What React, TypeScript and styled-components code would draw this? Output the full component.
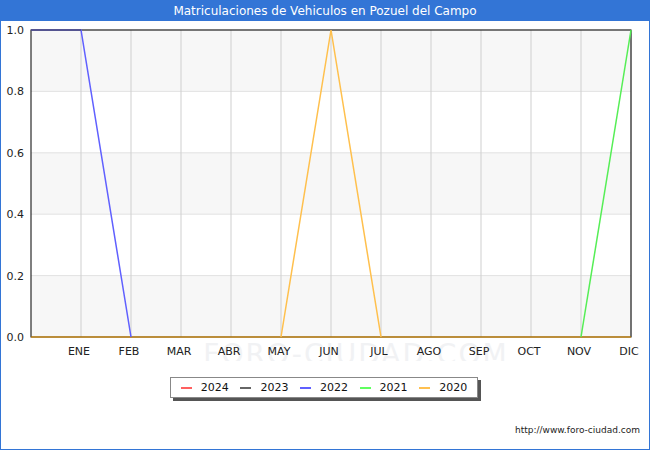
import React from 'react';
import styled, { createGlobalStyle } from 'styled-components';

const Global = createGlobalStyle`
  html, body { margin: 0; padding: 0; background: #fff; }
  body { font-family: "DejaVu Sans", sans-serif; }
`;

const Frame = styled.div`
  width: 650px;
  height: 450px;
  box-sizing: border-box;
  border: 1px solid #3375d6;
  border-top: none;
  display: flex;
  flex-direction: column;
  overflow: hidden;
`;

const Title = styled.div`
  height: 21px;
  background: #3375d6;
  color: #fff;
  font-size: 12px;
  display: flex;
  align-items: center;
  justify-content: center;
`;

const Legend = styled.div`
  align-self: flex-start;
  margin: 16px 0 0 169px;
  width: 308px;
  height: 21px;
  box-sizing: border-box;
  border: 1px solid #888;
  box-shadow: 3px 3px 0 #555;
  display: flex;
  align-items: center;
  justify-content: space-around;
  padding: 0 4px;
  font-size: 11px;
  color: #111;
`;

const Item = styled.div`
  display: flex;
  align-items: center;
  gap: 9px;
`;

const Swatch = styled.span<{ $c: string }>`
  width: 11px;
  height: 2px;
  background: ${p => p.$c};
`;

const Footer = styled.div`
  align-self: flex-end;
  margin: 27px 9px 0 0;
  font-size: 9px;
  color: #222;
`;

const months = ['ENE','FEB','MAR','ABR','MAY','JUN','JUL','AGO','SEP','OCT','NOV','DIC'];
const X = (i: number) => 30 + i * 50;
const Y = (v: number) => 337 - v * 307;

function Chart() {
  const yt = [0, 0.2, 0.4, 0.6, 0.8, 1.0];
  return (
    <svg width={648} height={340} style={{ display: 'block' }} viewBox="0 21 648 340">
      {[0, 2, 4].map(k => (
        <rect key={k} x={30} y={Y(yt[k] + 0.2)} width={600} height={61.4} fill="#f7f7f7" />
      ))}
      <text x={355} y={364} fontSize={28} textAnchor="middle" fill="#f1f2f4" letterSpacing={2}>FORO-CIUDAD.COM</text>
      {yt.map(v => (
        <g key={v}>
          <line x1={30} x2={630} y1={Y(v)} y2={Y(v)} stroke="#e2e2e2" />
          <text x={23} y={Y(v) + 4} fontSize={11} textAnchor="end" fill="#222">{v.toFixed(1)}</text>
        </g>
      ))}
      {months.map((m, i) => (
        <g key={m}>
          <line x1={X(i + 1)} x2={X(i + 1)} y1={30} y2={337} stroke="#cfcfcf" />
          <text x={X(i + 1) - 2} y={355} fontSize={11} textAnchor="middle" fill="#222">{m}</text>
        </g>
      ))}
      <rect x={30} y={30} width={600} height={307} fill="none" stroke="#000" />
      <polyline points={`${X(0)},${Y(0)} ${X(12)},${Y(0)}`} stroke="#ffa500" fill="none" />
      <polyline points={`${X(5)},${Y(0)} ${X(6)},${Y(1)} ${X(7)},${Y(0)}`} stroke="#ffc04d" strokeWidth={1.5} fill="none" />
      <polyline points={`${X(11)},${Y(0)} ${X(12)},${Y(1)}`} stroke="#55ee55" strokeWidth={1.5} fill="none" />
      <polyline points={`${X(0)},${Y(1)} ${X(1)},${Y(1)} ${X(2)},${Y(0)}`} stroke="#6060ff" strokeWidth={1.5} fill="none" />
      <polyline points={`${X(0)},${Y(1)} ${X(1)},${Y(1)}`} stroke="#444" strokeWidth={1} fill="none" />
    </svg>
  );
}

const years: [string, string][] = [
  ['2024', '#ff6060'],
  ['2023', '#666'],
  ['2022', '#6060ff'],
  ['2021', '#60ff60'],
  ['2020', '#ffc050'],
];

export default function App() {
  return (
    <>
      <Global />
      <Frame>
        <Title>Matriculaciones de Vehiculos en Pozuel del Campo</Title>
        <Chart />
        <Legend>
          {years.map(([y, c]) => (
            <Item key={y}><Swatch $c={c} />{y}</Item>
          ))}
        </Legend>
        <Footer>http://www.foro-ciudad.com</Footer>
      </Frame>
    </>
  );
}
